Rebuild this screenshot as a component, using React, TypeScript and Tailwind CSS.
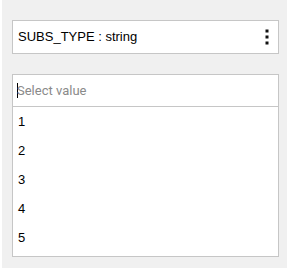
import React from "react";

const values = ["1", "2", "3", "4", "5"];

const App = () => {
  return (
    <div className="w-[289px] h-[268px] bg-white flex">
      <div className="ml-[2px] w-[285px] h-full bg-[#f0f0f0] pl-[10px] pt-[20px]">
        {/* field header */}
        <div className="w-[267px] h-[34px] bg-white border border-[#c6c6c6] flex items-center justify-between pl-[5px] pr-[9px]">
          <span className="text-[13px] text-black font-['Liberation_Sans',Arial,sans-serif]">
            SUBS_TYPE : string
          </span>
          <svg width="4" height="16" viewBox="0 0 4 16" className="block">
            <rect x="0.5" y="0.5" width="3" height="3" fill="#111" />
            <rect x="0.5" y="6.5" width="3" height="3" fill="#111" />
            <rect x="0.5" y="12.5" width="3" height="3" fill="#111" />
          </svg>
        </div>

        {/* value picker */}
        <div className="mt-[20px] w-[267px] h-[183px] bg-white border border-[#c6c6c6] flex flex-col">
          <div className="h-[32px] border-b border-[#c6c6c6] flex items-center pl-[4px]">
            <span className="w-px h-[15px] bg-black" />
            <span className="-ml-px text-[13px] text-[#8a8a8a] font-['Roboto',sans-serif]">
              Select value
            </span>
          </div>
          <ul className="flex flex-col">
            {values.map((v) => (
              <li
                key={v}
                className="h-[29px] flex items-center pl-[5px] text-[13px] text-black font-['Liberation_Sans',Arial,sans-serif]"
              >
                {v}
              </li>
            ))}
          </ul>
        </div>
      </div>
    </div>
  );
};

export default App;
